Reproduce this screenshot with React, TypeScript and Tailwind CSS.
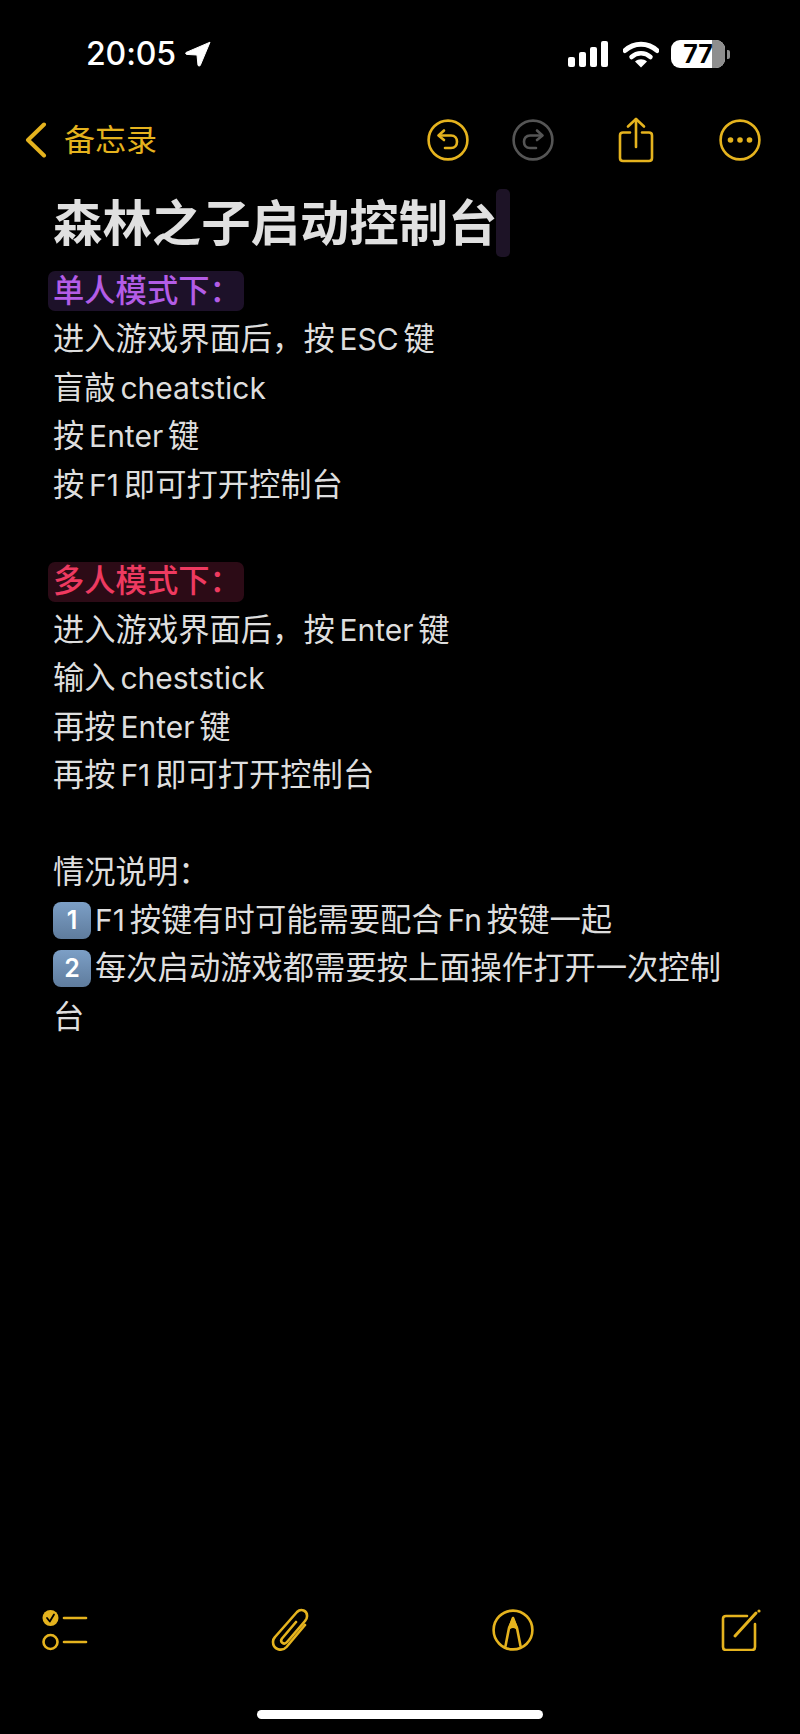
const gold = '#e5b31e';

function StatusBar() {
  return (
    <div className="flex h-[115px] items-start justify-between pl-[86px] pr-[70px] pt-[36px] text-white">
      <div className="flex items-center gap-[9px]">
        <span className="text-[32px] font-medium leading-[36px] tracking-[-0.1px]">20:05</span>
        <svg width="26" height="26" viewBox="0 0 26 26">
          <path d="M25 1.2 L1 11.5 Q0 12.8 1.5 13.4 L12 14 L13 24.4 Q14 25.6 15.2 24.6 Z" fill="#fff" stroke="#fff" strokeWidth="1" strokeLinejoin="round" />
        </svg>
      </div>
      <div className="flex items-center pt-[4px]">
        <svg width="40" height="26" viewBox="0 0 40 26">
          <rect x="0" y="16" width="7" height="10" rx="2" fill="#fff" />
          <rect x="11" y="11" width="7" height="15" rx="2" fill="#fff" />
          <rect x="22" y="6" width="7" height="20" rx="2" fill="#fff" />
          <rect x="33" y="0" width="7" height="26" rx="2" fill="#fff" />
        </svg>
        <svg className="ml-[15px]" width="36" height="27" viewBox="0 0 36 27">
          <path d="M2 9.5 C11 1 25 1 34 9.5" fill="none" stroke="#fff" strokeWidth="5" strokeLinecap="round" />
          <path d="M8.5 16 C14 11 22 11 27.5 16" fill="none" stroke="#fff" strokeWidth="4.5" strokeLinecap="round" />
          <path d="M18 26.5 L12 20.5 C15.5 17.6 20.5 17.6 24 20.5 Z" fill="#fff" />
        </svg>
        <div className="ml-[12px] flex items-center gap-[2px]">
          <div className="relative flex h-[28px] w-[54px] items-center justify-center rounded-[9px] bg-white">
            <div className="absolute bottom-0 right-0 top-0 w-[13px] rounded-r-[9px] bg-[#8e8e8e]" />
            <span className="relative text-[25px] font-bold leading-[28px] text-black">77</span>
          </div>
          <div className="h-[9px] w-[3px] rounded-r-[2px] bg-[#8e8e8e]" />
        </div>
      </div>
    </div>
  );
}

function CircleIcon({ color, children }: { color: string; children: React.ReactNode }) {
  return (
    <svg width="42" height="42" viewBox="0 0 42 42" fill="none" stroke={color} strokeWidth="2.6" strokeLinecap="round" strokeLinejoin="round">
      <circle cx="21" cy="21" r="19.4" />
      {children}
    </svg>
  );
}

function NavBar() {
  return (
    <div className="flex h-[50px] items-center pl-[25px]">
      <svg width="22" height="36" viewBox="0 0 22 36" fill="none" stroke={gold} strokeWidth="4" strokeLinecap="round" strokeLinejoin="round">
        <path d="M19 2.5 L3 18 L19 33.5" />
      </svg>
      <span className="ml-[17px] w-[363px] text-[31px] leading-[40px] text-[#e5b31e]">备忘录</span>
      <CircleIcon color={gold}>
        <path d="M17 11.5 L11.5 16.5 L17 21" />
        <path d="M12 16.5 H24 C32 16.5 32 29 24 29 H18" />
      </CircleIcon>
      <div className="ml-[43px]">
        <CircleIcon color="#555555">
          <path d="M25 11.5 L30.5 16.5 L25 21" />
          <path d="M30 16.5 H18 C10 16.5 10 29 18 29 H24" />
        </CircleIcon>
      </div>
      <svg className="ml-[64px]" width="36" height="46" viewBox="0 0 36 46" fill="none" stroke={gold} strokeWidth="2.6" strokeLinecap="round" strokeLinejoin="round">
        <path d="M12 15.5 H5 Q2 15.5 2 18.5 V41 Q2 44 5 44 H31 Q34 44 34 41 V18.5 Q34 15.5 31 15.5 H24" />
        <path d="M18 30 V2" />
        <path d="M10 9.5 L18 2 L26 9.5" />
      </svg>
      <div className="ml-[65px]">
        <svg width="42" height="42" viewBox="0 0 42 42" fill="none">
          <circle cx="21" cy="21" r="19.4" stroke={gold} strokeWidth="2.6" />
          <circle cx="11.5" cy="21" r="2.8" fill={gold} />
          <circle cx="21" cy="21" r="2.8" fill={gold} />
          <circle cx="30.5" cy="21" r="2.8" fill={gold} />
        </svg>
      </div>
    </div>
  );
}

function Keycap({ n }: { n: string }) {
  return (
    <span className="mr-[4px] inline-flex h-[37px] w-[38px] -translate-y-[2px] items-center justify-center rounded-[8px] bg-gradient-to-b from-[#7c9fc6] to-[#5f7c9d] align-middle text-[25px] font-semibold leading-none text-white">
      {n}
    </span>
  );
}

function Line({ children }: { children?: React.ReactNode }) {
  return <div className="h-[48.4px] leading-[48.4px]">{children}</div>;
}

// latin runs sit a touch smaller than the cjk around them
function L({ children }: { children: React.ReactNode }) {
  return <span className="text-[30px]">{children}</span>;
}

function Heading({ text, bg, color }: { text: string; bg: string; color: string }) {
  return (
    <div className="h-[48.4px] leading-[48.4px]">
      <span className={`-ml-[5px] inline-flex h-[40px] w-[196px] items-center rounded-[7px] pl-[5px] font-medium ${bg} ${color}`}>{text}</span>
    </div>
  );
}

function Note() {
  return (
    <div className="pl-[53px] pr-[60px] text-[31.3px] text-[#dedede] [word-spacing:-4px]">
      <div className="mb-[9px] flex h-[70px] items-center">
        <span className="text-[49.4px] font-bold leading-[70px] text-[#e0e0e0]">森林之子启动控制台</span>
        <span className="-ml-[2px] h-[68px] w-[14px] rounded-[5px] bg-[#1d1326]" />
      </div>
      <Heading text="单人模式下：" bg="bg-[#1d1129]" color="text-[#b35ce6]" />
      <Line>进入游戏界面后，按 <L>ESC</L> 键</Line>
      <Line>盲敲 <L>cheatstick</L></Line>
      <Line>按 <L>Enter</L> 键</Line>
      <Line>按 <L>F1</L> 即可打开控制台</Line>
      <Line />
      <Heading text="多人模式下：" bg="bg-[#2c0b16]" color="text-[#ee3a60]" />
      <Line>进入游戏界面后，按 <L>Enter</L> 键</Line>
      <Line>输入 <L>cheststick</L></Line>
      <Line>再按 <L>Enter</L> 键</Line>
      <Line>再按 <L>F1</L> 即可打开控制台</Line>
      <Line />
      <Line>情况说明：</Line>
      <Line><Keycap n="1" /><L>F1</L> 按键有时可能需要配合 <L>Fn</L> 按键一起</Line>
      <div className="leading-[48.4px]"><Keycap n="2" />每次启动游戏都需要按上面操作打开一次控制台</div>
    </div>
  );
}

function Toolbar() {
  return (
    <div className="flex items-center justify-between pl-[42px] pr-[39px]">
      <svg width="46" height="42" viewBox="0 0 46 42" fill="none" stroke={gold} strokeWidth="2.6" strokeLinecap="round" strokeLinejoin="round">
        <circle cx="8.5" cy="9" r="8" fill={gold} stroke="none" />
        <path d="M5 9 L7.8 12.5 L12 5.5" stroke="#000" strokeWidth="1.8" />
        <circle cx="8.5" cy="33" r="7" />
        <path d="M22 9 H44" />
        <path d="M22 33 H44" />
      </svg>
      <svg width="38" height="44" viewBox="0 0 38 44" fill="none" stroke={gold} strokeWidth="2.6" strokeLinecap="round" strokeLinejoin="round">
        <path d="M34 17 L15.5 39 C11 44 2 41.5 2 34 C2 32 3 30 4 29 L26 4 C30 0 36.5 2.5 36 8.5 C36 10 35 12 34 13 L16 34 C13 37.5 8.5 34 11 30.5 L25 14" />
      </svg>
      <svg className="mr-[4px]" width="42" height="42" viewBox="0 0 42 42" fill="none" stroke={gold} strokeWidth="2.6" strokeLinecap="round" strokeLinejoin="round">
        <circle cx="21" cy="21" r="19.4" />
        <path d="M13.5 37 L17 19 L21 10 L25 19 L28.5 37" />
        <path d="M21 9 L24.5 19 Q21 16.5 17.5 19 Z" fill={gold} />
      </svg>
      <svg width="40" height="42" viewBox="0 0 40 42" fill="none" stroke={gold} strokeWidth="2.6" strokeLinecap="round" strokeLinejoin="round">
        <path d="M26 7 H5 Q2 7 2 10 V38 Q2 41 5 41 H31 Q34 41 34 38 V15" />
        <path d="M14 27 L35 4" strokeWidth="3" />
        <circle cx="38" cy="2" r="1.6" fill={gold} stroke="none" />
      </svg>
    </div>
  );
}

export default function App() {
  return (
    <div className="flex h-[1734px] w-[800px] flex-col overflow-hidden bg-black font-['Inter','Noto_Sans_CJK_SC',sans-serif]">
      <StatusBar />
      <NavBar />
      <div className="flex-1 pt-[23px]">
        <Note />
      </div>
      <Toolbar />
      <div className="flex justify-center pb-[15px] pt-[58px]">
        <div className="h-[9px] w-[286px] rounded-full bg-white" />
      </div>
    </div>
  );
}
